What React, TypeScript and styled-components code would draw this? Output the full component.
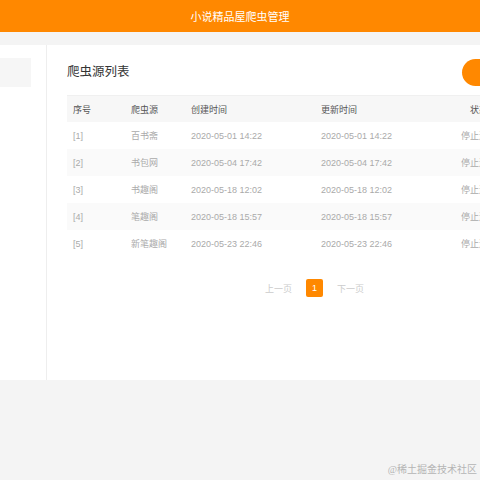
import styled, { createGlobalStyle } from "styled-components";

const GlobalStyle = createGlobalStyle`
  html, body {
    margin: 0;
    padding: 0;
    width: 480px;
    height: 480px;
    overflow: hidden;
    background: #f4f4f4;
    font-family: "Liberation Sans", "Noto Sans CJK SC", sans-serif;
  }
`;

const orange = "#ff8800";

const Page = styled.div`
  position: relative;
  width: 480px;
  height: 480px;
  overflow: hidden;
  background: #f4f4f4;
`;

const Header = styled.div`
  height: 32px;
  background: ${orange};
  color: #fff;
  font-size: 11px;
  display: flex;
  align-items: center;
  justify-content: center;
`;

const Body = styled.div`
  padding-top: 13px;
`;

const Panel = styled.div`
  height: 335px;
  background: #fff;
  display: flex;
  overflow: hidden;
`;

const Sidebar = styled.div`
  flex: 0 0 46px;
  border-right: 1px solid #eeeeee;
  padding-top: 13px;
`;

const MenuItem = styled.div`
  width: 31px;
  height: 29px;
  background: #f6f6f6;
`;

const Main = styled.div`
  flex: 0 0 495px;
  padding: 14px 0 0 20px;
`;

const TitleRow = styled.div`
  display: flex;
  align-items: center;
  height: 27px;
`;

const Title = styled.div`
  font-size: 12.5px;
  color: #333;
  padding-bottom: 5px;
`;

const AddButton = styled.button`
  margin-left: auto;
  width: 100px;
  height: 27px;
  border: none;
  border-radius: 14px;
  background: ${orange};
  color: #fff;
  font-size: 9px;
`;

const Table = styled.div`
  margin-top: 9px;
  border-top: 1px solid #f0f0f0;
`;

const Row = styled.div<{ $head?: boolean; $striped?: boolean }>`
  display: grid;
  grid-template-columns: 58px 60px 130px 135px 58px 54px;
  height: ${(p) => (p.$head ? 26 : 27)}px;
  align-items: center;
  font-size: 9px;
  color: ${(p) => (p.$head ? "#555" : "#aaaaaa")};
  background: ${(p) => (p.$head ? "#f7f7f7" : p.$striped ? "#fafafa" : "#fff")};
`;

const Cell = styled.div<{ $center?: boolean }>`
  padding-left: ${(p) => (p.$center ? 0 : 6)}px;
  text-align: ${(p) => (p.$center ? "center" : "left")};
  white-space: nowrap;
`;

const Pager = styled.div`
  margin-top: 22px;
  display: flex;
  align-items: center;
  justify-content: center;
  gap: 14px;
  font-size: 9px;
`;

const PageLink = styled.span`
  color: #cccccc;
`;

const PageNumber = styled.span`
  width: 17px;
  height: 18px;
  border-radius: 2px;
  background: ${orange};
  color: #fff;
  display: flex;
  align-items: center;
  justify-content: center;
`;

const Watermark = styled.div`
  position: absolute;
  right: 3px;
  bottom: 4px;
  font-family: "Liberation Serif", "Noto Sans CJK SC", serif;
  font-size: 10px;
  color: #b5b5b5;
`;

const sources = [
  { id: 1, name: "百书斋", created: "2020-05-01 14:22", updated: "2020-05-01 14:22" },
  { id: 2, name: "书包网", created: "2020-05-04 17:42", updated: "2020-05-04 17:42" },
  { id: 3, name: "书趣阁", created: "2020-05-18 12:02", updated: "2020-05-18 12:02" },
  { id: 4, name: "笔趣阁", created: "2020-05-18 15:57", updated: "2020-05-18 15:57" },
  { id: 5, name: "新笔趣阁", created: "2020-05-23 22:46", updated: "2020-05-23 22:46" },
];

export default function App() {
  return (
    <Page>
      <GlobalStyle />
      <Header>小说精品屋爬虫管理</Header>
      <Body>
        <Panel>
          <Sidebar>
            <MenuItem />
          </Sidebar>
          <Main>
            <TitleRow>
              <Title>爬虫源列表</Title>
              <AddButton>新增爬虫源</AddButton>
            </TitleRow>
            <Table>
              <Row $head>
                <Cell>序号</Cell>
                <Cell>爬虫源</Cell>
                <Cell>创建时间</Cell>
                <Cell>更新时间</Cell>
                <Cell $center>状态</Cell>
                <Cell $center>操作</Cell>
              </Row>
              {sources.map((s, i) => (
                <Row key={s.id} $striped={i % 2 === 1}>
                  <Cell>[{s.id}]</Cell>
                  <Cell>{s.name}</Cell>
                  <Cell>{s.created}</Cell>
                  <Cell>{s.updated}</Cell>
                  <Cell $center>停止运行</Cell>
                  <Cell $center>修改</Cell>
                </Row>
              ))}
            </Table>
            <Pager>
              <PageLink>上一页</PageLink>
              <PageNumber>1</PageNumber>
              <PageLink>下一页</PageLink>
            </Pager>
          </Main>
        </Panel>
      </Body>
      <Watermark>@稀土掘金技术社区</Watermark>
    </Page>
  );
}
